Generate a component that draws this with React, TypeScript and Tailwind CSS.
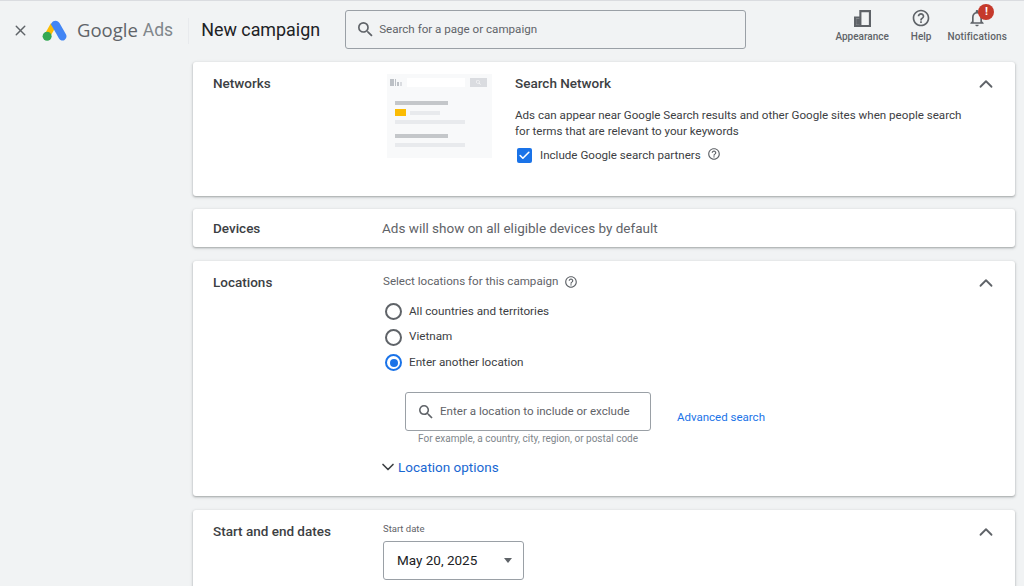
import { ChevronUp, ChevronDown, X, Check } from 'lucide-react';
import type { ReactNode } from 'react';

const HelpDot = ({ className = '' }: { className?: string }) => (
  <svg viewBox="0 0 24 24" className={className} fill="currentColor">
    <path d="M11 18h2v-2h-2v2zm1-16C6.48 2 2 6.48 2 12s4.48 10 10 10 10-4.48 10-10S17.52 2 12 2zm0 18c-4.41 0-8-3.59-8-8s3.59-8 8-8 8 3.59 8 8-3.59 8-8 8zm0-14c-2.21 0-4 1.79-4 4h2c0-1.1.9-2 2-2s2 .9 2 2c0 2-3 1.75-3 5h2c0-2.25 3-2.5 3-5 0-2.21-1.79-4-4-4z" />
  </svg>
);

const SearchIcon = ({ className = '' }: { className?: string }) => (
  <svg viewBox="3 3 18 18" className={className} fill="currentColor">
    <path d="M15.5 14h-.79l-.28-.27A6.471 6.471 0 0 0 16 9.5 6.500 6.500 0 1 0 9.500 16c1.610 0 3.090-.59 4.230-1.570l.27.28v.79l5 4.990L20.490 19l-4.990-5zm-6 0C7.010 14 5 11.990 5 9.500S7.010 5 9.500 5 14 7.010 14 9.500 11.990 14 9.500 14z" />
  </svg>
);

const AdsLogo = () => (
  <svg viewBox="0 0 26 24" className="w-[25px] h-[23px]">
    <path d="M9.2 4.5 2.6 16.2l5.4 3.1 6.6-11.7z" fill="#fbbc04" />
    <path d="M16.6 2.6c-1.9-1.4-5.2-.9-6.6 1.5-.4.7-.8 1.4-.8 1.4l5.4 9.4 2.9 5.1c1.4 2.4 4.2 3 6 1.8 2-1.3 2.6-3.9 1.4-6L18.2 4.300c-.4-.7-1-1.300-1.600-1.700z" fill="#4285f4" />
    <circle cx="5.300" cy="18" r="4.700" fill="#34a853" />
  </svg>
);

const TopAction = ({ icon, label, labelClass = '' }: { icon: ReactNode; label: string; labelClass?: string }) => (
  <div className="flex flex-col items-center text-[#5f6368]">
    <div className="h-[20px] flex items-center justify-center">{icon}</div>
    <span className={`text-[10px] leading-[14px] font-medium mt-[2px] ${labelClass}`}>{label}</span>
  </div>
);

const Header = () => (
  <header className="h-[62px] flex items-start border-t border-[#dadce0] shrink-0">
    <div className="flex items-center h-[59px] pl-[12px]">
      <X className="w-[17px] h-[17px] text-[#5f6368] mr-[13px]" strokeWidth={2} />
      <AdsLogo />
      <span className="ml-[10px] -mt-[2px] text-[18.500px] text-[#5f6368] font-['Open_Sans',sans-serif]">Google</span>
      <span className="ml-[5px] text-[17.500px] text-[#80868b]">Ads</span>
      <div className="w-px h-[26px] bg-[#e8eaed] ml-[15px] mr-[12px]" />
      <span className="text-[17.900px] text-[#202124] w-[144px]">New campaign</span>
    </div>
    <div className="mt-[9px] w-[401px] h-[39px] border border-[#9aa0a6] rounded-[3px] flex items-center pl-[12px] gap-[6px] text-[#5f6368] text-[11.600px] bg-[#f1f3f4]">
      <SearchIcon className="w-[15px] h-[15px] text-[#5f6368]" />
      <span>Search for a page or campaign</span>
    </div>
    <div className="ml-auto flex items-start pr-[17px] pt-[7px]">
      <TopAction
        label="Appearance"
        icon={
          <svg viewBox="0 0 16 16" className="w-[17px] h-[17px]" fill="#5f6368">
            <path d="M0 6h5V3.500h0V0h11v16H0zm7-4v12h7V2zM5 8H2v6h3z" fillRule="evenodd" />
            <path d="M2 8h4v6H2z" />
          </svg>
        }
      />
      <div className="ml-[22px]">
        <TopAction label="Help" icon={<HelpDot className="w-[20px] h-[20px]" />} />
      </div>
      <div className="relative ml-[16px]">
        <TopAction label="Notifications" labelClass="tracking-[0.15px]" icon={<svg viewBox="0 0 24 24" className="w-[20px] h-[20px]" fill="#5f6368"><path d="M12 22c1.100 0 2-.9 2-2h-4c0 1.100.9 2 2 2zm6-6v-5c0-3.070-1.630-5.640-4.500-6.320V4c0-.83-.67-1.500-1.500-1.500s-1.500.67-1.500 1.500v.68C7.640 5.360 6 7.920 6 11v5l-2 2v1h16v-1l-2-2zm-2 1H8v-6c0-2.480 1.510-4.500 4-4.500s4 2.020 4 4.500v6z" /></svg>} />
        <span className="absolute left-[31px] top-[-4px] w-[16px] h-[16px] rounded-full bg-[#c5392b] text-white text-[11px] font-bold leading-[16px] text-center">!</span>
      </div>
    </div>
  </header>
);

const Card = ({ title, collapsed, className, children }: { title: string; collapsed?: boolean; className: string; children: ReactNode }) => (
  <section className={`bg-white rounded-[3px] shadow-[0_1px_2px_rgba(60,64,67,0.35),0_1px_3px_1px_rgba(60,64,67,0.1)] flex pl-[20px] pr-[18px] shrink-0 ${className}`}>
    <h2 className="w-[170px] shrink-0 text-[13.500px] font-medium text-[#3c4043] leading-[20px]">{title}</h2>
    <div className="flex-1 min-w-0">{children}</div>
    {!collapsed && <ChevronUp className="w-[22px] h-[22px] text-[#5f6368] shrink-0" strokeWidth={2} />}
  </section>
);

// little browser preview next to Search Network
const NetworkArt = () => (
  <div className="w-[105px] h-[84px] bg-[#f8f9fa] shrink-0 px-[8px] pt-[4px] ml-[4px] mt-[1px]">
    <div className="h-[9px] -mx-[5px] flex items-center">
      <div className="flex gap-[1px] items-end w-[13px]">
        <div className="w-[4px] h-[7px] bg-[#bdc1c6]" />
        <div className="w-[1px] h-[7px] bg-[#bdc1c6]" />
        <div className="w-[2px] h-[4px] bg-[#bdc1c6]" />
        <div className="w-[2px] h-[4px] bg-[#dadce0]" />
      </div>
      <div className="h-[9px] w-[58px] ml-[4px] bg-white" />
      <div className="h-[9px] w-[17px] ml-[5px] bg-[#dadce0] flex items-center justify-center">
        <SearchIcon className="w-[5px] h-[5px] text-white" />
      </div>
    </div>
    <div className="h-[4px] w-[53px] bg-[#c4c7ca] mt-[14px]" />
    <div className="flex items-center gap-[4px] mt-[4px]">
      <div className="w-[11px] h-[7px] bg-[#fbbc04]" />
      <div className="w-[30px] h-[4px] bg-[#e8eaed]" />
    </div>
    <div className="h-[4px] w-[70px] bg-[#e8eaed] mt-[4px]" />
    <div className="h-[4px] w-[53px] bg-[#c4c7ca] mt-[10px]" />
    <div className="h-[4px] w-[70px] bg-[#e8eaed] mt-[5px]" />
  </div>
);

const Radio = ({ label, on }: { label: string; on?: boolean }) => (
  <div className="flex items-center h-[25.500px]">
    <span className={`w-[17px] h-[17px] rounded-full border-[2px] flex items-center justify-center ml-[2px] ${on ? 'border-[#1a73e8]' : 'border-[#5f6368]'}`}>
      {on && <span className="w-[8px] h-[8px] rounded-full bg-[#1a73e8]" />}
    </span>
    <span className="ml-[7px] text-[11.700px] text-[#3c4043]">{label}</span>
  </div>
);

export default function App() {
  return (
    <div className="h-[586px] w-[1024px] overflow-hidden bg-[#f1f3f4] flex flex-col font-['Roboto',sans-serif]">
      <Header />
      <main className="ml-[193px] w-[822px] flex flex-col">
        <Card title="Networks" className="h-[134px] pt-[11px]">
          <div className="flex">
            <NetworkArt />
            <div className="ml-[23px] w-[460px]">
              <div className="text-[13.500px] font-medium text-[#3c4043] leading-[20px]">Search Network</div>
              <p className="mt-[14px] text-[11.600px] leading-[16px] text-[#3c4043]">
                Ads can appear near Google Search results and other Google sites when people search for terms that are relevant to your keywords
              </p>
              <div className="flex items-center mt-[8px] ml-[2px]">
                <span className="w-[15px] h-[15px] rounded-[2px] bg-[#1a73e8] flex items-center justify-center">
                  <Check className="w-[13px] h-[13px] text-white" strokeWidth={3} />
                </span>
                <span className="ml-[8px] text-[11.600px] text-[#3c4043]">Include Google search partners</span>
                <HelpDot className="w-[14px] h-[14px] text-[#5f6368] ml-[6px] -mt-[3px]" />
              </div>
            </div>
          </div>
        </Card>
        <Card title="Devices" collapsed className="h-[38px] mt-[13px] pt-[9px]">
          <span className="text-[13.500px] text-[#5f6368] leading-[20px] block -ml-[1px]">Ads will show on all eligible devices by default</span>
        </Card>
        <Card title="Locations" className="h-[235px] mt-[14px] pt-[11px]">
          <div className="flex items-center text-[11.600px] text-[#5f6368] h-[20px]">
            Select locations for this campaign
            <HelpDot className="w-[14px] h-[14px] ml-[6px]" />
          </div>
          <div className="mt-[7px]">
            <Radio label="All countries and territories" />
            <Radio label="Vietnam" />
            <Radio label="Enter another location" on />
          </div>
          <div className="flex items-start mt-[16.500px] ml-[22px]">
            <div>
              <div className="w-[246px] h-[39px] border border-[#9aa0a6] rounded-[3px] flex items-center pl-[13px] gap-[7px] text-[11.600px] text-[#5f6368]">
                <SearchIcon className="w-[14px] h-[14px]" />
                <span>Enter a location to include or exclude</span>
              </div>
              <div className="text-[10px] text-[#80868b] mt-[1px] ml-[13px] leading-[14px]">For example, a country, city, region, or postal code</div>
            </div>
            <span className="ml-[26px] mt-[17px] text-[11.500px] text-[#1a73e8]">Advanced search</span>
          </div>
          <div className="flex items-center mt-[11px] -ml-[5px] text-[13.500px] text-[#1967d2]">
            <ChevronDown className="w-[20px] h-[20px] text-[#3c4043]" strokeWidth={2} />
            <span>Location options</span>
          </div>
        </Card>
        <Card title="Start and end dates" className="h-[120px] mt-[14px] pt-[11px]">
          <div className="text-[9.500px] text-[#5f6368] leading-[14px] mt-[1px]">Start date</div>
          <div className="mt-[5px] w-[141px] h-[39px] border border-[#9aa0a6] rounded-[3px] flex items-center pl-[13px] pr-[11px] justify-between text-[13.500px] text-[#202124]">
            <span>May 20, 2025</span>
            <span className="w-0 h-0 border-x-[4.500px] border-x-transparent border-t-[5px] border-t-[#5f6368]" />
          </div>
        </Card>
      </main>
    </div>
  );
}
